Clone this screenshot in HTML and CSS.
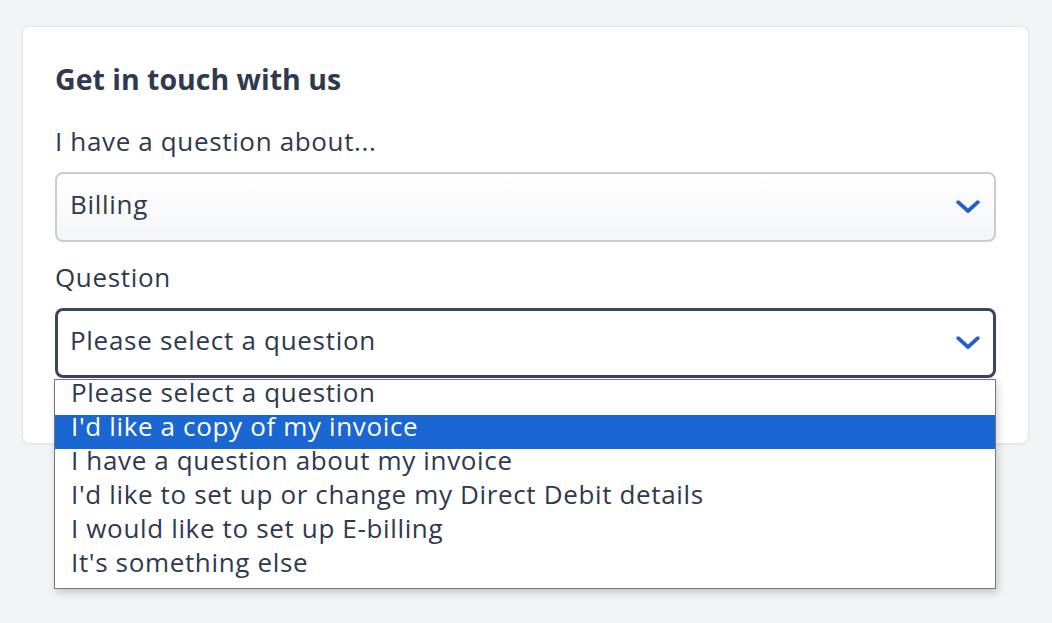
FILE: index.html
```html
<!DOCTYPE html>
<html lang="en">
<head>
<meta charset="utf-8">
<title>Get in touch with us</title>
<link rel="stylesheet" href="styles.css">
</head>
<body>
<div class="page">
  <div class="card">
    <h2 class="title">Get in touch with us</h2>
    <div class="field">
      <div class="label">I have a question about...</div>
      <div class="select">
        <span class="value">Billing</span>
        <svg class="chev" width="24" height="14" viewBox="0 0 24 14"><path d="M2.2 2.2 L12 11 L21.8 2.2" fill="none" stroke="#2461c3" stroke-width="3.8" stroke-linecap="round" stroke-linejoin="round"/></svg>
      </div>
    </div>
    <div class="field">
      <div class="label">Question</div>
      <div class="select-wrap">
        <div class="select focused">
          <span class="value">Please select a question</span>
          <svg class="chev" width="24" height="14" viewBox="0 0 24 14"><path d="M2.2 2.2 L12 11 L21.8 2.2" fill="none" stroke="#2461c3" stroke-width="3.8" stroke-linecap="round" stroke-linejoin="round"/></svg>
        </div>
        <ul class="options">
          <li class="opt">Please select a question</li>
          <li class="opt active">I'd like a copy of my invoice</li>
          <li class="opt">I have a question about my invoice</li>
          <li class="opt">I'd like to set up or change my Direct Debit details</li>
          <li class="opt">I would like to set up E-billing</li>
          <li class="opt">It's something else</li>
        </ul>
      </div>
    </div>
  </div>
</div>
</body>
</html>
```
FILE: styles.css
```css
* { box-sizing: border-box; }
html, body { margin: 0; padding: 0; }
body {
  background: #f3f4f6;
  font-family: "Open Sans", "Noto Sans", sans-serif;
  color: #2e3950;
  width: 1052px;
  height: 623px;
  overflow: hidden;
}
.page { padding: 26px 23px 0 22px; }
.card {
  background: #fff;
  border: 1px solid #e4e6ea;
  border-radius: 8px;
  box-shadow: 0 1px 3px rgba(0, 0, 0, 0.06);
  padding: 34px 32px 0 32px;
  height: 418px;
}
.title {
  margin: 0;
  font-size: 28.5px;
  line-height: 36px;
  font-weight: 700;
  color: #2f3a4f;
}
.field { margin-top: 28px; }
.field + .field { margin-top: 19px; }
.label {
  font-size: 26px;
  line-height: 32px;
  letter-spacing: 0.65px;
  margin-bottom: 15px;
}
.select {
  height: 70px;
  border: 2px solid #c9ccd1;
  border-radius: 8px;
  background: linear-gradient(#ffffff, #f4f5f7);
  display: flex;
  align-items: center;
  justify-content: space-between;
  padding: 0 14px 0 13px;
  font-size: 26px;
  letter-spacing: 0.7px;
}
.select.focused {
  border: 3px solid #3a4661;
  background: #fff;
  padding-left: 12px;
  padding-right: 13px;
}
.value { line-height: 30px; padding-bottom: 6px; }
.chev { display: block; }
.select-wrap { position: relative; }
.options {
  position: absolute;
  left: -1px;
  right: 0;
  top: 71px;
  margin: 0;
  padding: 1px 0 3px 0;
  list-style: none;
  background: #fff;
  border: 1px solid #767676;
  box-shadow: 2px 4px 8px rgba(0,0,0,0.18);
  z-index: 2;
}
.opt {
  height: 34px;
  line-height: 22px;
  padding-left: 16px;
  font-size: 26px;
  letter-spacing: 0.65px;
  color: #2e3950;
  white-space: nowrap;
}
.opt.active { background: #1a66d2; color: #fff; }
```
